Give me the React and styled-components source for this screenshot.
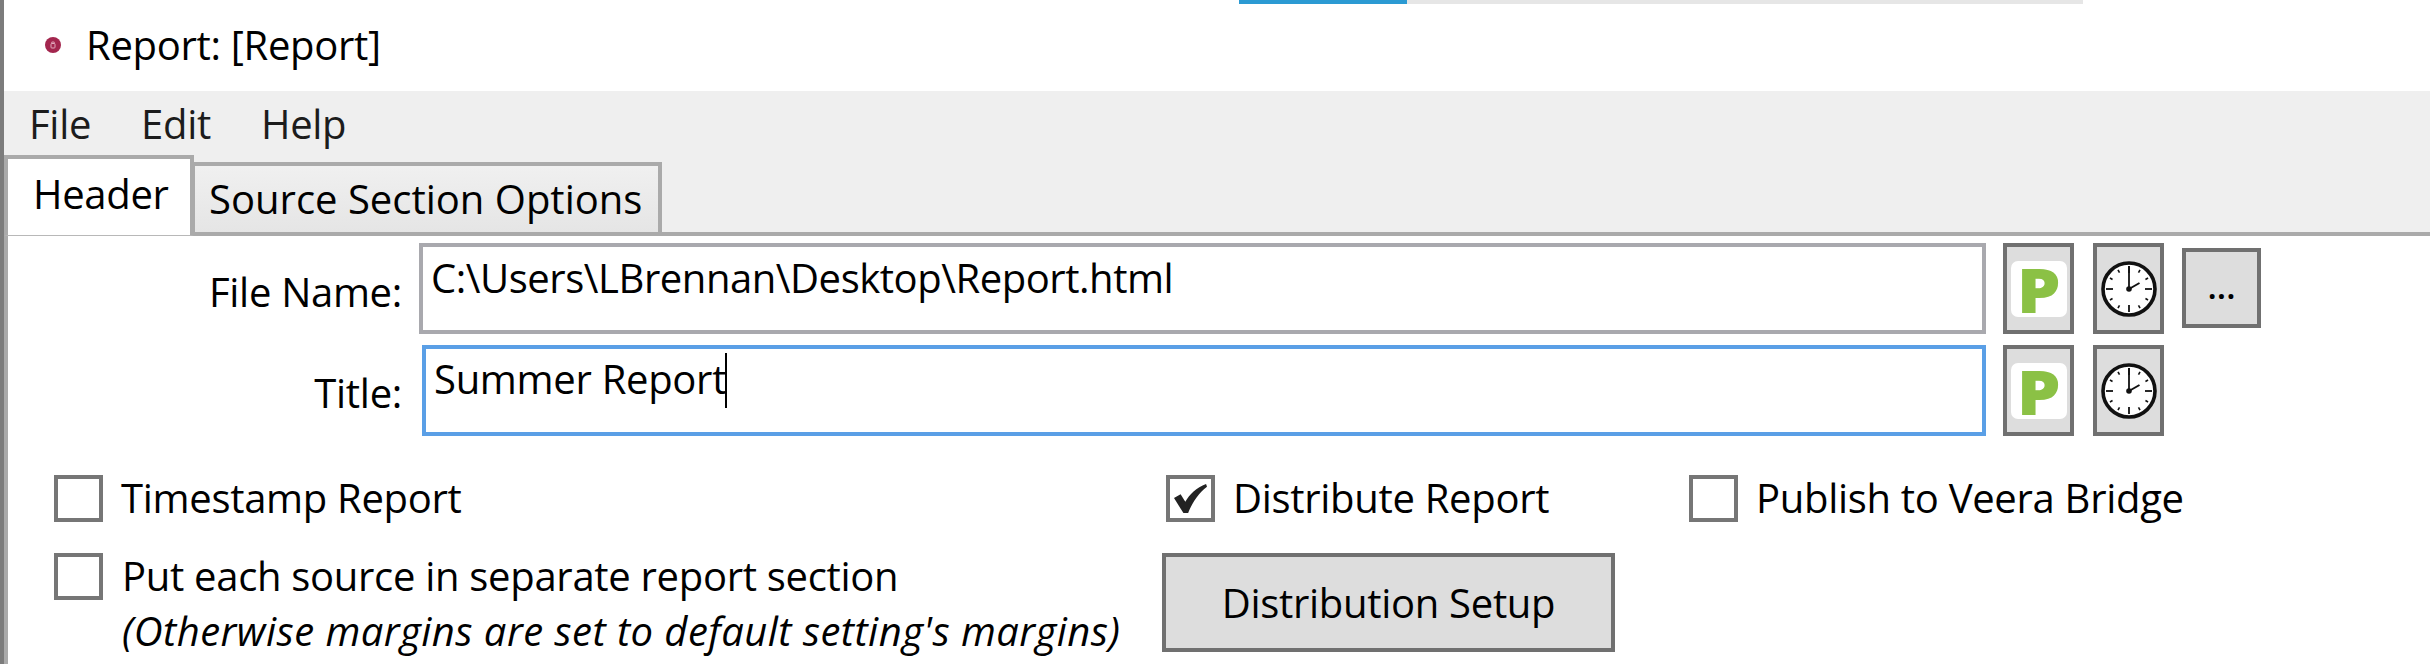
import React from 'react';
import styled, { createGlobalStyle } from 'styled-components';

const GlobalStyle = createGlobalStyle`
  html, body {
    margin: 0;
    padding: 0;
    background: #fff;
  }
  * {
    box-sizing: border-box;
  }
`;

const Window = styled.div`
  width: 2430px;
  height: 664px;
  overflow: hidden;
  border-left: 4px solid #7c7c7c;
  background: #fff;
  color: #000;
  font-family: "Open Sans", "Noto Sans", sans-serif;
  font-size: 40px;
  letter-spacing: -0.3px;
`;

const TitleBar = styled.div`
  height: 91px;
  display: flex;
  flex-direction: column;
`;

const Progress = styled.div`
  width: 844px;
  height: 4px;
  margin-left: 1235px;
  background: #e6e6e6;
`;

const ProgressFill = styled.div`
  width: 168px;
  height: 100%;
  background: #2b9ad3;
`;

const TitleRow = styled.div`
  display: flex;
  align-items: center;
  gap: 25px;
  padding: 0 0 0 41px;
  height: 82px;
  line-height: 52px;
`;

const AppIcon = styled.svg`
  width: 16px;
  height: 16px;
  flex: none;
`;

const TopBand = styled.div`
  height: 145px;
  background: #efefef;
  display: flex;
  flex-direction: column;
  border-bottom: 4px solid #aaaaaa;
`;

const MenuBar = styled.div`
  display: flex;
  height: 64px;
  padding: 4px 0 0 25px;
  gap: 50px;
  align-items: center;
  color: #1c1c1c;
`;

const MenuItem = styled.span`
  line-height: 50px;
`;

const TabStrip = styled.div`
  display: flex;
  align-items: flex-end;
  height: 81px;
`;

const ActiveTab = styled.div`
  width: 190px;
  height: 81px;
  margin-bottom: -4px;
  background: #fff;
  border: 4px solid #aaaaaa;
  border-bottom: 1px solid #b8b8b8;
  padding: 0 0 0 25px;
  line-height: 69px;
  position: relative;
  z-index: 1;
`;

const Tab = styled.div`
  width: 471px;
  height: 70px;
  margin-left: -3px;
  border: 4px solid #aaaaaa;
  border-bottom: none;
  padding: 0 0 0 14px;
  line-height: 65px;
  letter-spacing: 0;
  white-space: nowrap;
  background: linear-gradient(#f0f0f0, #e5e5e5);
`;

const Body = styled.div`
  border-left: 4px solid #aaaaaa;
  height: 428px;
  padding-top: 7px;
`;

const FieldRow = styled.div`
  display: flex;
  align-items: flex-start;
  height: 91px;
  margin-bottom: 11px;
  width: 2253px;
`;

const FieldLabel = styled.div`
  width: 394px;
  flex: none;
  text-align: right;
  line-height: 52px;
  padding-top: ${p => p.$top}px;
`;

const TextBox = styled.div`
  flex: 1;
  height: 91px;
  margin-left: ${p => p.$gap}px;
  border: 4px solid ${p => (p.$focused ? '#5a9fe6' : '#a9a9ae')};
  padding: ${p => (p.$focused ? '4px 0 0 8px' : '5px 0 0 8px')};
  letter-spacing: ${p => (p.$focused ? -0.3 : -0.45)}px;
  line-height: 52px;
  white-space: nowrap;
`;

const Caret = styled.span`
  display: inline-block;
  width: 2px;
  height: 55px;
  background: #000;
  vertical-align: top;
  margin-left: -1px;
`;

const IconButton = styled.div`
  flex: none;
  width: 71px;
  height: 91px;
  margin-left: ${p => p.$gap}px;
  background: #dddddd;
  border: 4px solid #707070;
  display: flex;
  align-items: center;
  padding-top: 1px;
  padding-left: ${p => p.$inset}px;
`;

const PBadge = styled.div`
  width: 56px;
  height: 56px;
  border-radius: 7px;
  background: #fff;
  color: #8bc145;
  font-weight: 800;
  font-size: 62px;
  line-height: 56px;
  letter-spacing: 0;
  text-align: center;
`;

const PLetter = styled.span`
  display: inline-block;
  transform: scaleX(1.12);
`;

const ClockFace = styled.svg`
  width: 56px;
  height: 56px;
  display: block;
`;

const MoreButton = styled.div`
  flex: none;
  width: 79px;
  height: 80px;
  margin: 5px 0 0 18px;
  background: #dddddd;
  border: 4px solid #707070;
  font-weight: 600;
  font-size: 34px;
  letter-spacing: 0;
  line-height: 68px;
  text-align: center;
`;

const RowSpacer = styled.div`
  flex: none;
  width: 97px;
`;

const Options = styled.div`
  display: grid;
  grid-template-columns: 1108px 527px 1fr;
  grid-template-rows: 78px 99px;
  padding: 28px 0 0 46px;
`;

const Option = styled.div`
  display: flex;
  align-items: flex-start;
  gap: ${p => p.$gap || 18}px;
  padding-left: ${p => p.$inset || 0}px;
`;

const CheckBox = styled.div`
  flex: none;
  width: 49px;
  height: 47px;
  border: 4px solid #767676;
  background: #fff;
  display: flex;
  align-items: center;
  justify-content: center;
`;

const OptionText = styled.div`
  line-height: 55px;
  margin-top: -5px;
  white-space: nowrap;
`;

const Hint = styled.div`
  font-style: italic;
  letter-spacing: 0.45px;
`;

const ActionButton = styled.div`
  width: 453px;
  height: 99px;
  background: #dddddd;
  border: 4px solid #707070;
  text-align: center;
  line-height: 92px;
  white-space: nowrap;
`;

function Clock() {
  const ticks = [];
  for (let i = 0; i < 12; i++) {
    const major = i % 3 === 0;
    ticks.push(
      <line
        key={i}
        x1="28"
        y1={major ? 5 : 6}
        x2="28"
        y2={major ? 12 : 9}
        stroke="#111"
        strokeWidth={major ? 1.8 : 1.6}
        transform={`rotate(${i * 30} 28 28)`}
      />
    );
  }
  return (
    <ClockFace viewBox="0 0 56 56">
      <circle cx="28" cy="28" r="26" fill="#fff" stroke="#111" strokeWidth="3.6" />
      {ticks}
      <line x1="28" y1="28" x2="28" y2="5" stroke="#111" strokeWidth="1.8" />
      <line x1="28" y1="28" x2="38.5" y2="22" stroke="#111" strokeWidth="2" />
      <circle cx="28" cy="28" r="2.8" fill="#111" />
    </ClockFace>
  );
}

function CheckMark() {
  return (
    <svg width="33" height="31" viewBox="0 0 35 31">
      <path d="M0 15L7 11L12 19C16 11 24 4 34 0L35 3C26 10 19 20 15 31H10Z" fill="#222" />
    </svg>
  );
}

export default function App() {
  return (
    <>
      <GlobalStyle />
      <Window>
        <TitleBar>
          <Progress>
            <ProgressFill />
          </Progress>
          <TitleRow>
            <AppIcon viewBox="0 0 16 16">
              <circle cx="8" cy="8" r="8" fill="#a3264e" />
              <rect x="6" y="6.5" width="4" height="4.5" rx="0.8" fill="none" stroke="#e9b8c8" strokeWidth="0.9" />
              <path d="M6.8 6.5V5h2.4v1.5" fill="none" stroke="#e9b8c8" strokeWidth="0.8" />
            </AppIcon>
            Report: [Report]
          </TitleRow>
        </TitleBar>
        <TopBand>
          <MenuBar>
            <MenuItem>File</MenuItem>
            <MenuItem>Edit</MenuItem>
            <MenuItem>Help</MenuItem>
          </MenuBar>
          <TabStrip>
            <ActiveTab>Header</ActiveTab>
            <Tab>Source Section Options</Tab>
          </TabStrip>
        </TopBand>
        <Body>
          <FieldRow>
            <FieldLabel $top={23}>File Name:</FieldLabel>
            <TextBox $gap={17}>C:\Users\LBrennan\Desktop\Report.html</TextBox>
            <IconButton $gap={17} $inset={4}><PBadge><PLetter>P</PLetter></PBadge></IconButton>
            <IconButton $gap={19} $inset={4}><Clock /></IconButton>
            <MoreButton>...</MoreButton>
          </FieldRow>
          <FieldRow>
            <FieldLabel $top={22}>Title:</FieldLabel>
            <TextBox $gap={20} $focused>
              Summer Report<Caret />
            </TextBox>
            <IconButton $gap={17} $inset={4}><PBadge><PLetter>P</PLetter></PBadge></IconButton>
            <IconButton $gap={19} $inset={4}><Clock /></IconButton>
            <RowSpacer />
          </FieldRow>
          <Options>
            <Option>
              <CheckBox />
              <OptionText>Timestamp Report</OptionText>
            </Option>
            <Option $inset={4}>
              <CheckBox><CheckMark /></CheckBox>
              <OptionText>Distribute Report</OptionText>
            </Option>
            <Option>
              <CheckBox />
              <OptionText>Publish to Veera Bridge</OptionText>
            </Option>
            <Option $gap={19}>
              <CheckBox />
              <OptionText>
                Put each source in separate report section
                <Hint>(Otherwise margins are set to default setting's margins)</Hint>
              </OptionText>
            </Option>
            <ActionButton>Distribution Setup</ActionButton>
          </Options>
        </Body>
      </Window>
    </>
  );
}
